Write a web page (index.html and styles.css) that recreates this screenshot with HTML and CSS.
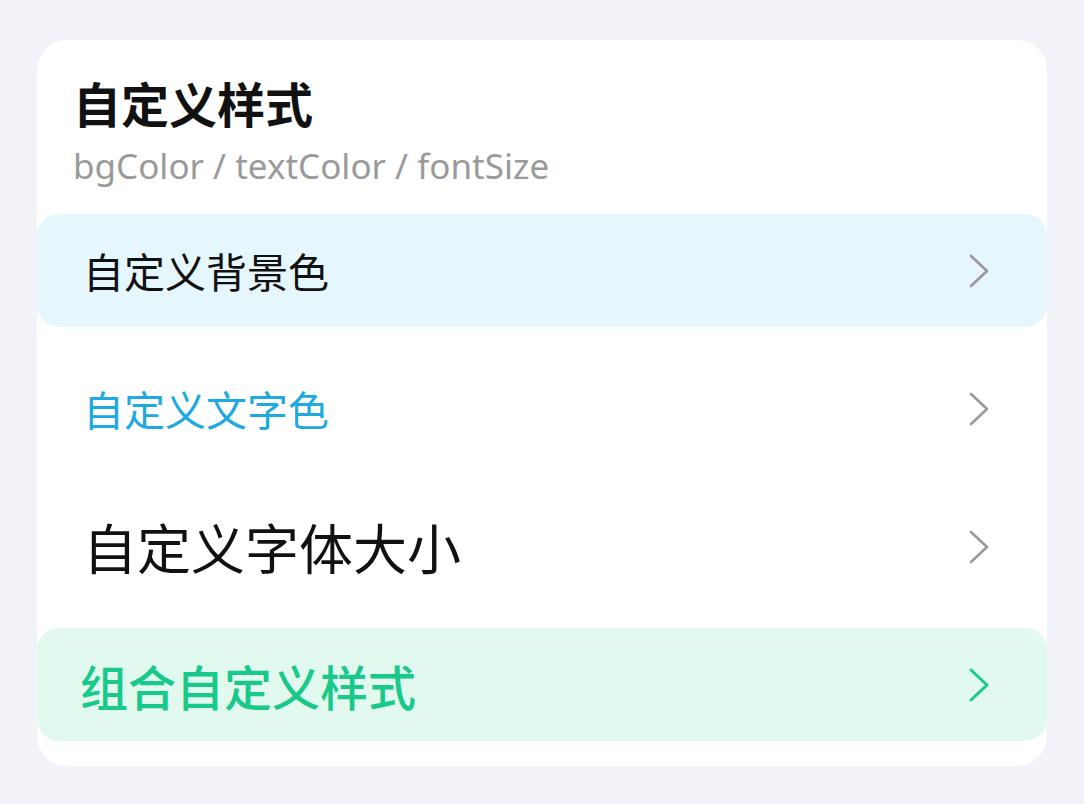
FILE: index.html
```html
<!DOCTYPE html>
<html lang="zh">
<head>
<meta charset="utf-8">
<link rel="stylesheet" href="styles.css">
</head>
<body>
<div class="card">
  <div class="head">
    <div class="title">自定义样式</div>
    <div class="sub">bgColor / textColor / fontSize</div>
  </div>
  <div class="list">
    <div class="row row-bg">
      <span class="label">自定义背景色</span>
      <svg class="chev" viewBox="0 0 22 36"><path d="M3 3 L19 18 L3 33"/></svg>
    </div>
    <div class="row">
      <span class="label label-blue">自定义文字色</span>
      <svg class="chev" viewBox="0 0 22 36"><path d="M3 3 L19 18 L3 33"/></svg>
    </div>
    <div class="row">
      <span class="label label-big">自定义字体大小</span>
      <svg class="chev" viewBox="0 0 22 36"><path d="M3 3 L19 18 L3 33"/></svg>
    </div>
    <div class="row row-green">
      <span class="label label-green">组合自定义样式</span>
      <svg class="chev chev-green" viewBox="0 0 22 36"><path d="M3 3 L19 18 L3 33"/></svg>
    </div>
  </div>
</div>
</body>
</html>
```
FILE: styles.css
```css
html, body {
  margin: 0;
  padding: 0;
  background: #f1f3f8;
  font-family: "Noto Sans CJK SC", "Noto Sans", sans-serif;
}
body {
  padding: 40px 37px 0;
  height: 804px;
  box-sizing: border-box;
}
.card {
  background: #ffffff;
  border-radius: 30px;
  padding-bottom: 25px;
  overflow: hidden;
}
.head {
  padding: 30px 36px 0;
  height: 174px;
  box-sizing: border-box;
}
.title {
  font-size: 48px;
  font-weight: 700;
  color: #111;
  line-height: 64px;
}
.sub {
  font-family: "Noto Sans", "Open Sans", sans-serif;
  font-size: 35px;
  color: #9a9a9a;
  line-height: 46px;
  margin-top: 9px;
}
.list {
  display: flex;
  flex-direction: column;
  gap: 25px;
}
.row {
  height: 113px;
  display: flex;
  align-items: center;
  justify-content: space-between;
  padding: 0 57px 0 46px;
  border-radius: 22px;
}
.row-bg { background: #e5f6fd; }
.row-green { background: #e2f9f0; }
.label {
  font-size: 41px;
  color: #111;
  line-height: 1;
}
.label-blue { color: #1fa9e1; }
.label-big { font-size: 54px; }
.label-green { font-size: 48px; color: #18c98a; font-weight: 500; margin-left: -3px; }
.chev {
  width: 22px;
  height: 36px;
  fill: none;
  stroke: #999;
  stroke-width: 2.6;
  stroke-linecap: round;
  stroke-linejoin: round;
}
.chev-green { stroke: #18c98a; stroke-width: 3; }
```
